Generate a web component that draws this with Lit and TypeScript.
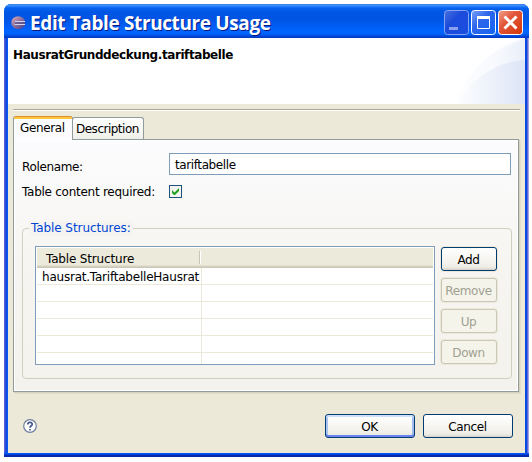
import { LitElement, html, css } from "lit";
import { customElement, property } from "lit/decorators.js";

@customElement("xp-button")
class XpButton extends LitElement {
  @property() label = "";
  @property({ type: Boolean, reflect: true }) disabled = false;
  @property({ type: Boolean, reflect: true }) primary = false;
  static styles = css`
    :host { display: block; height: 24px; }
    button {
      display: flex; align-items: center; justify-content: center;
      width: 100%; height: 24px; padding: 1px 1px 0 0; box-sizing: border-box;
      border: 1px solid #003c74; border-radius: 3px;
      background: linear-gradient(#fff, #f4f3ee 65%, #ecebe6 88%, #d6d0c5);
      box-shadow: 0 0 0 1px #ece9d8;
      font: 12px "DejaVu Sans", Verdana, sans-serif; letter-spacing: -0.4px; color: #000;
    }
    :host([disabled]) button { background: #f5f4ea; border-color: #c9c7ba; color: #a1a192; }
    :host([primary]) button {
      box-shadow: inset 0 2px #cee0fb, inset 0 -2px #6982ee, inset 2px 0 #a9c3f3, inset -2px 0 #a0bbef;
    }
  `;
  render() {
    return html`<button ?disabled=${this.disabled}>${this.label}</button>`;
  }
}

@customElement("app-root")
class AppRoot extends LitElement {
  static styles = css`
    :host { display: block; width: 532px; height: 462px; box-sizing: border-box; padding: 4px 3px 5px 4px;
      background: #fff; overflow: hidden; font: 12px/15px "DejaVu Sans", Verdana, sans-serif; letter-spacing: -0.3px; color: #000; }
    * { box-sizing: border-box; }
    .window { height: 453px; display: flex; flex-direction: column; padding: 0 4px 4px;
      border-radius: 7px 7px 0 0;
      background:
        linear-gradient(#0054f0 0 1px, #0044dd 1px 2px, #0a2ba8 2px 4px) bottom / 100% 4px no-repeat,
        linear-gradient(90deg, #5a5fd8 0 1px, #2c4cdc 1px 2px, #0a4be0 2px 3px, #0a56f0 3px 4px, transparent 4px 521px, #0a48e4 521px 523px, #5a68d8 523px 524px, #a0a4dc 524px) 0 34px / 100% 415px no-repeat,
        #0050e8; }
    .title { flex: none; height: 34px; margin: 0 -4px; padding: 0 6px 0 7px; display: flex; align-items: center;
      border-radius: 7px 7px 0 0;
      background: linear-gradient(#2f66cf 0, #4b9bff 1px, #2c84fb 2px, #0862ee 4px, #0055e5 8px, #0054e3 15px, #005ef5 23px, #0066ff 28px, #0060f5 30px, #003fce 33px, #0038bd); }
    .logo { flex: none; width: 15px; height: 14px; display: block; margin-top: 3px; }
    .caption { flex: 1; margin: 3px 0 0 4px; white-space: nowrap; color: #fff; text-shadow: 1px 1px #0a1883;
      font: bold 19px/24px "Open Sans", "Noto Sans", sans-serif; letter-spacing: -0.38px; }
    .controls { display: flex; gap: 2px; margin-top: 3px; }
    .ctl { width: 25px; height: 25px; display: block; }
    .client { flex: 1; display: flex; flex-direction: column; background: #ece9d8; min-height: 0; }
    .banner { height: 66px; flex: none; display: flex; justify-content: space-between; background: #fff; }
    .heading { font-weight: bold; margin: 10px 0 0 5px; letter-spacing: -0.41px; }
    .curve { display: block; width: 75px; height: 66px; }
    .rule { flex: none; height: 2px; margin: 5px 5px 0; background: linear-gradient(#aca899 50%, #fff 50%); }
    .tabs { flex: none; display: flex; align-items: flex-end; height: 29px; padding-left: 5px; margin-bottom: -1px; position: relative; }
    .tab { white-space: nowrap; border: 1px solid #919b9c; border-bottom: 0; border-radius: 3px 3px 0 0; }
    .tab.on { width: 60px; height: 24px; padding: 5px 0 0 6px; letter-spacing: -0.38px; border-top: 0;
      background: linear-gradient(#e68b2c 0 1px, #ffc73c 1px 3px, #fcfcfe 3px); }
    .tab.off { width: 72px; height: 22px; padding: 4px 0 0 3px; margin: 0 0 1px -1px; background: linear-gradient(#fff, #f0f0ea); letter-spacing: -0.5px; }
    .panel { flex: none; width: 506px; height: 253px; margin-left: 5px; padding: 13px 6px 12px 8px;
      border: 1px solid #919b9c; box-shadow: inset 0 0 0 1px #fff, 1px 1px #d5d2c0, 2px 2px #e0ddcb;
      background: linear-gradient(#fcfcfe, #f6f5f1 48%, #f3f2ed); }
    .field { display: flex; align-items: center; }
    .field .name { width: 147px; white-space: nowrap; letter-spacing: -0.26px; }
    .input { width: 342px; height: 22px; padding: 4px 5px 2px; border: 1px solid #7f9db9; background: #fff; letter-spacing: -0.4px; }
    .role .name { padding-top: 6px; letter-spacing: -0.35px; }
    .req { margin-top: 10px; height: 13px; }
    .req .name { padding-top: 1px; }
    .check { width: 13px; height: 13px; display: block; }
    .group { display: flex; gap: 6px; width: 490px; height: 151px; margin-top: 30px; padding: 17px 0 0 12px;
      border: 1px solid #d0d0bf; border-radius: 4px; position: relative; }
    .legend { position: absolute; left: 6px; top: -8px; padding: 0 2px; background: #f5f4f0; color: #0046d5; letter-spacing: -0.08px; }
    .table { width: 400px; height: 119px; border: 1px solid #7f9db9; background: #fff; padding: 1px; display: flex; flex-direction: column; }
    .row { flex: none; height: 17px; display: grid; grid-template-columns: 165px 1fr; border-bottom: 1px solid #ece9d8; }
    .row:last-child { height: 11px; border-bottom: 0; }
    .cell { padding-left: 5px; white-space: nowrap; border-right: 1px solid #ece9d8; line-height: 18px; height: 16px; letter-spacing: -0.22px; }
    .row:last-child .cell { height: 11px; }
    .cell:last-child { border-right: 0; }
    .head { flex: none; height: 20px; display: flex; padding: 3px 0 0 9px;
      background: linear-gradient(#ebeadb 0 17px, #e2decd 17px 18px, #d6d2c2 18px 19px, #cbc7b8 19px); }
    .head .col { width: 154px; height: 13px; line-height: 17px; letter-spacing: -0.17px; border-right: 1px solid #c7c5b2; box-shadow: 1px 0 #fff; }
    .buttons { width: 56px; padding-top: 1px; display: grid; gap: 7px; align-content: start; }
    .footer { flex: 1; display: flex; align-items: center; padding: 7px 12px 0 15px; }
    .help { width: 14px; height: 14px; display: block; margin-right: auto; }
    .wide { width: 90px; margin-left: 8px; }
  `;

  private actions = [
    { label: "Add", disabled: false },
    { label: "Remove", disabled: true },
    { label: "Up", disabled: true },
    { label: "Down", disabled: true },
  ];
  private rows = ["hausrat.TariftabelleHausrat", "", "", "", "", ""];

  render() {
    return html`
      <div class="window">
        <div class="title">
          <svg class="logo" viewBox="0 0 15 14">
            <defs><linearGradient id="orb" x2="1" y2="1"><stop stop-color="#e8b0b4" /><stop offset=".45" stop-color="#94749f" /><stop offset="1" stop-color="#3d3a86" /></linearGradient></defs>
            <ellipse cx="7.2" cy="6.7" rx="6.9" ry="6.5" fill="url(#orb)" />
            <path d="M4 5.5h10M3.500 8.5h10.5" stroke="#d5d2ed" />
            <path d="M4 7h10.3" stroke="#4d4a88" />
          </svg>
          <div class="caption">Edit Table Structure Usage</div>
          <div class="controls">
            <svg class="ctl" viewBox="0 0 25 25">
              <defs><linearGradient id="m" x2="1" y2="1"><stop stop-color="#4870df" /><stop offset=".4" stop-color="#1c4bdb" /><stop offset="1" stop-color="#194fe0" /></linearGradient></defs>
              <rect x=".5" y=".5" width="24" height="24" rx="3" fill="url(#m)" stroke="#82a4f2" />
              <path d="M5 17h9v3H5z" fill="#8c9fee" />
            </svg>
            <svg class="ctl" viewBox="0 0 25 25">
              <defs><linearGradient id="x" x2="1" y2="1"><stop stop-color="#7ba2fa" /><stop offset=".4" stop-color="#2f66ea" /><stop offset="1" stop-color="#1265f6" /></linearGradient></defs>
              <rect x=".5" y=".5" width="24" height="24" rx="3" fill="url(#x)" stroke="#fff" />
              <path d="M6.5 8v10.5h12V8" fill="none" stroke="#fff" /><path d="M6 6h13v3H6z" fill="#fff" />
            </svg>
            <svg class="ctl" viewBox="0 0 25 25">
              <defs><linearGradient id="c" x2="1" y2="1"><stop stop-color="#f2a38c" /><stop offset=".4" stop-color="#e2563a" /><stop offset="1" stop-color="#d43708" /></linearGradient></defs>
              <rect x=".5" y=".5" width="24" height="24" rx="3" fill="url(#c)" stroke="#fff" />
              <path d="M6.5 6.5l12 12M18.5 6.5l-12 12" stroke="#fff" stroke-width="3" />
            </svg>
          </div>
        </div>
        <div class="client">
          <div class="banner">
            <div class="heading">HausratGrunddeckung.tariftabelle</div>
            <svg class="curve" viewBox="0 0 75 66">
              <defs>
                <linearGradient id="g1"><stop stop-color="#fff" /><stop offset="1" stop-color="#e6ecf8" /></linearGradient>
                <linearGradient id="g2"><stop stop-color="#fff" /><stop offset="1" stop-color="#dce4f6" /></linearGradient>
              </defs>
              <path d="M2 66C18 34 42 9 75 0V66z" fill="url(#g1)" opacity=".55" />
              <path d="M34 40C44 22 56 8 75 1V66H34z" fill="url(#g1)" opacity=".7" />
              <path d="M5 66C22 42 44 24 75 22V66z" fill="url(#g2)" />
            </svg>
          </div>
          <div class="rule"></div>
          <div class="tabs">
            <div class="tab on">General</div>
            <div class="tab off">Description</div>
          </div>
          <div class="panel">
            <div class="field role"><span class="name">Rolename:</span><div class="input">tariftabelle</div></div>
            <div class="field req">
              <span class="name">Table content required:</span>
              <svg class="check" viewBox="0 0 13 13">
                <rect x=".5" y=".5" width="12" height="12" fill="#f4f4ef" stroke="#1c5180" />
                <path d="M3 5v3l2 2h1l4-4V3L5.5 7.5z" fill="#21a121" />
              </svg>
            </div>
            <div class="group">
              <span class="legend">Table Structures:</span>
              <div class="table">
                <div class="head"><span class="col">Table Structure</span></div>
                ${this.rows.map((r) => html`<div class="row"><span class="cell">${r}</span><span class="cell"></span></div>`)}
              </div>
              <div class="buttons">
                ${this.actions.map((a) => html`<xp-button .label=${a.label} ?disabled=${a.disabled}></xp-button>`)}
              </div>
            </div>
          </div>
          <div class="footer">
            <svg class="help" viewBox="0 0 14 14">
              <circle cx="7" cy="7" r="6.3" fill="#fff" stroke="#6d7f9e" stroke-width="1.2" />
              <path d="M4.8 5.5C4.8 2.7 9.2 2.7 9.2 5.2C9.2 6.8 7 6.7 7 8.8M7 10v1.6" fill="none" stroke="#46598c" stroke-width="1.7" />
            </svg>
            <xp-button class="wide" label="OK" primary></xp-button>
            <xp-button class="wide" label="Cancel"></xp-button>
          </div>
        </div>
      </div>
    `;
  }
}
